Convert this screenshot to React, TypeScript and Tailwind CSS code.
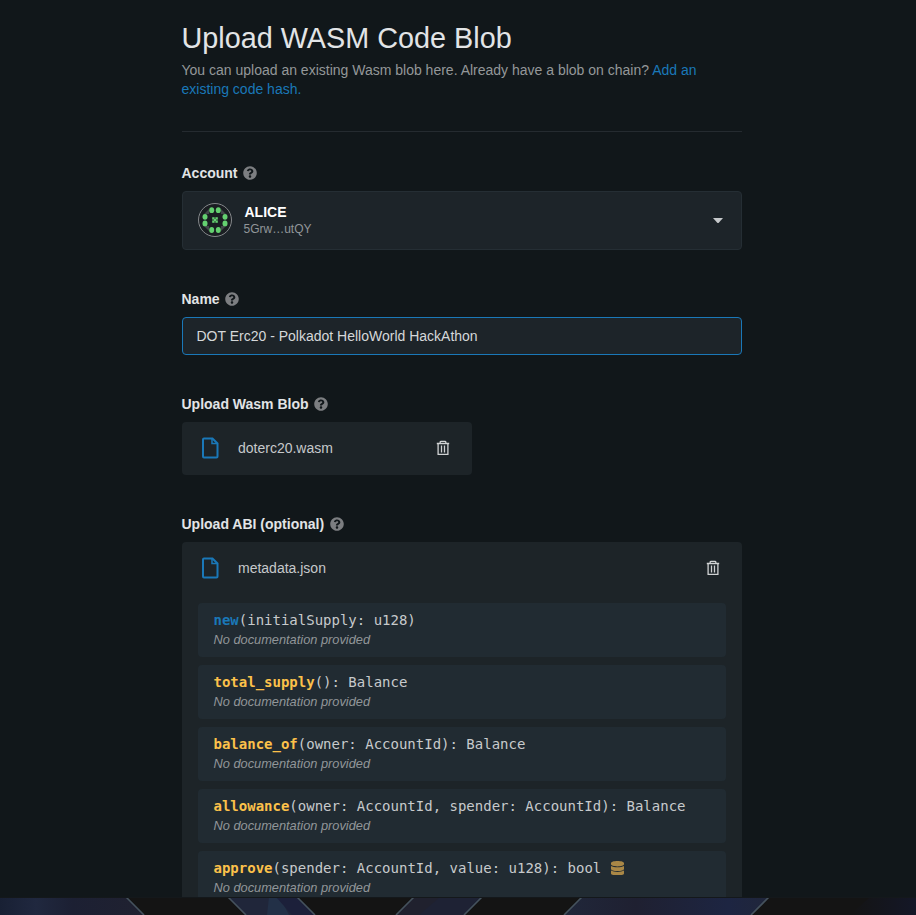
import React from 'react';

type Method = { name: string; signature: string; kind: 'constructor' | 'message'; mutates?: boolean };

const methods: Method[] = [
  { name: 'new', signature: '(initialSupply: u128)', kind: 'constructor' },
  { name: 'total_supply', signature: '(): Balance', kind: 'message' },
  { name: 'balance_of', signature: '(owner: AccountId): Balance', kind: 'message' },
  { name: 'allowance', signature: '(owner: AccountId, spender: AccountId): Balance', kind: 'message' },
  { name: 'approve', signature: '(spender: AccountId, value: u128): bool', kind: 'message', mutates: true },
];

function HelpIcon() {
  return (
    <svg viewBox="0 0 512 512" className="ml-[5.5px] h-[14px] w-[14px] shrink-0 fill-[#7c7e81]">
      <path d="M504 256c0 136.997-111.043 248-248 248S8 392.997 8 256C8 119.083 119.043 8 256 8s248 111.083 248 248zM262.655 90c-54.497 0-89.255 22.957-116.549 63.758-3.536 5.286-2.353 12.415 2.715 16.258l34.699 26.31c5.205 3.947 12.621 3.008 16.665-2.122 17.864-22.658 30.113-35.797 57.303-35.797 20.429 0 45.698 13.148 45.698 32.958 0 14.976-12.363 22.667-32.534 33.976C247.128 238.528 216 254.941 216 296v4c0 6.627 5.373 12 12 12h56c6.627 0 12-5.373 12-12v-1.333c0-28.462 83.186-29.647 83.186-106.667 0-58.002-60.165-102-116.531-102zM256 338c-25.365 0-46 20.635-46 46 0 25.364 20.635 46 46 46s46-20.636 46-46c0-25.365-20.635-46-46-46z" />
    </svg>
  );
}

function Label({ children }: { children: React.ReactNode }) {
  return (
    <div className="flex h-5 items-center text-sm font-bold leading-5 text-[#e2e4e6]">
      <span>{children}</span>
      <HelpIcon />
    </div>
  );
}

function FileIcon() {
  return (
    <svg viewBox="0 0 18 22" className="h-[22px] w-[18px] fill-none stroke-[#1a78b8] stroke-2">
      <path d="M3 1.5H11.5L16.5 6.5V19.5Q16.5 20.5 15.5 20.5H3Q2 20.5 2 19.5V2.5Q2 1.5 3 1.5Z" />
      <path d="M11 1.5V6.5H16.5" strokeWidth="1.5" />
    </svg>
  );
}

function TrashIcon() {
  return (
    <svg viewBox="0 0 14 16" className="h-4 w-[14px] fill-none stroke-[#d0d2d3]" strokeWidth="1.3">
      <path d="M.8 3.5H13.2M4.2 3.3V2Q4.2 1.4 5 1.4H9Q9.8 1.4 9.8 2V3.3M2.1 3.5V14.4H11.9V3.5M5.5 5.5V12.5M8.5 5.5V12.5" />
    </svg>
  );
}

function DatabaseIcon() {
  return (
    <svg viewBox="0 0 448 512" preserveAspectRatio="none" className="ml-[9.5px] h-[14.5px] w-[13px] fill-[#a98746]">
      <path d="M448 73.143v45.714C448 159.143 347.667 192 224 192S0 159.143 0 118.857V73.143C0 32.857 100.333 0 224 0s224 32.857 224 73.143zM448 176v102.857C448 319.143 347.667 352 224 352S0 319.143 0 278.857V176c48.125 33.143 136.208 48.572 224 48.572S399.874 209.143 448 176zm0 160v102.857C448 479.143 347.667 512 224 512S0 479.143 0 438.857V336c48.125 33.143 136.208 48.572 224 48.572S399.874 369.143 448 336z" />
    </svg>
  );
}

function Identicon() {
  const dots = [[13.7, 7.2], [20.3, 7.2], [7, 13.8], [7, 20.4], [27, 13.8], [27, 20.4], [13.7, 27], [20.3, 27]];
  return (
    <svg viewBox="0 0 34 34" className="mb-[2px] h-[34px] w-[34px]">
      <circle cx="17" cy="17" r="16.5" className="fill-[#1a1e22] stroke-[#85888b]" />
      <path d="M6 11L11 6V11ZM28 11L23 6V11ZM6 23L11 28V23ZM28 23L23 28V23Z" className="fill-[#42464a]" />
      {dots.map(([x, y]) => (
        <ellipse key={`${x}-${y}`} cx={x} cy={y} rx="2.5" ry="2.9" className="fill-[#64d070]" />
      ))}
      {[14.2, 17.4].map((x) => [14.2, 17.4].map((y) => (
        <rect key={`${x}-${y}`} x={x} y={y} width="2.4" height="2.4" className="fill-[#64d070]" />
      )))}
      <path d="M16 16H18V18H16Z" className="fill-[#64d070]" />
    </svg>
  );
}

function FileRow({ name }: { name: string }) {
  return (
    <div className="flex h-[53px] items-center pb-[2px] pl-[19.5px] pr-[22px]">
      <FileIcon />
      <span className="ml-[19px] flex-1 text-sm text-[#c6c9cb]">{name}</span>
      <TrashIcon />
    </div>
  );
}

function MethodCard({ method }: { method: Method }) {
  return (
    <div className="h-[54px] shrink-0 rounded bg-[#212b32] pl-4 pt-[7px]">
      <div className="flex h-5 items-center whitespace-pre font-['DejaVu_Sans_Mono',monospace] text-sm leading-5 text-[#c7cacc]">
        <span className={method.kind === 'constructor' ? 'font-bold text-[#1a78b8]' : 'font-bold text-[#fcc14a]'}>{method.name}</span>
        <span>{method.signature}</span>
        {method.mutates && <DatabaseIcon />}
      </div>
      <div className="text-[12.8px] italic leading-[19px] text-[#919699]">No documentation provided</div>
    </div>
  );
}

function Wallpaper() {
  return (
    <svg viewBox="0 0 916 18" preserveAspectRatio="none" className="block h-[18px] w-full">
      <defs>
        <linearGradient id="leftBand">
          <stop offset="0" stopColor="#182034" /><stop offset=".25" stopColor="#20283f" />
          <stop offset=".5" stopColor="#1c2033" /><stop offset="1" stopColor="#202130" />
        </linearGradient>
        <linearGradient id="rightBand">
          <stop offset="0" stopColor="#20273a" /><stop offset=".35" stopColor="#1f2031" />
          <stop offset=".8" stopColor="#1d2542" /><stop offset="1" stopColor="#20263a" />
        </linearGradient>
        <linearGradient id="farEdge">
          <stop offset="0" stopColor="#141414" /><stop offset="1" stopColor="#141727" />
        </linearGradient>
      </defs>
      <rect width="916" height="18" fill="#141414" />
      <path d="M0 0H126L144 18H0Z" fill="url(#leftBand)" />
      <path d="M228 0H297L315 18H246Z" fill="#20263a" />
      <path d="M269 0H280L289 18H267Z" fill="#223047" />
      <path d="M276 0H297L315 18H292Z" fill="#1c203a" />
      <path d="M414 0H482L464 18H396Z" fill="#20212e" />
      <path d="M440 0H482L464 18H419Z" fill="#1e2234" />
      <path d="M582 0H769L751 18H564Z" fill="url(#rightBand)" />
      <path d="M870 0H916V18H850Z" fill="url(#farEdge)" />
      <path d="M126 0L144 18M228 0L246 18M297 0L315 18M414 0L396 18M482 0L464 18M582 0L564 18M769 0L751 18" fill="none" stroke="#45525d" strokeWidth="1.6" />
      <path d="M0 .5H916" stroke="#14181b" />
    </svg>
  );
}

export default function App() {
  return (
    <div className="flex h-[915px] w-[916px] flex-col overflow-hidden bg-[#11171a] font-['Liberation_Sans',Arial,sans-serif]">
      <main className="h-[897px] shrink-0 overflow-hidden pl-[181.5px] pr-[174px]">
        <header className="h-[132px] border-b border-[#252b30] pt-[20px]">
          <h1 className="text-[28.8px] leading-[36px] text-[#e2e4e6]">Upload WASM Code Blob</h1>
          <p className="mt-[5px] text-sm leading-[19px] text-[#949799]">
            You can upload an existing Wasm blob here. Already have a blob on chain?{' '}
            <a className="text-[#1a78b8]">Add an<br />existing code hash.</a>
          </p>
        </header>

        <section className="mt-[31px]">
          <Label>Account</Label>
          <div className="mt-2 flex h-[59px] items-center rounded border border-[#252e34] bg-[#1d2429] pl-[15px] pr-[18px]">
            <Identicon />
            <div className="ml-[12px] flex-1">
              <div className="pl-px text-sm font-bold leading-[17px] text-white">ALICE</div>
              <div className="text-xs leading-4 text-[#919699]">5Grw…utQY</div>
            </div>
            <svg viewBox="0 0 10 5" className="mb-px h-[5px] w-[10px] fill-[#c6c9cb]"><path d="M0 0H10L6 4.5Q5 5.5 4 4.5Z" /></svg>
          </div>
        </section>

        <section className="mt-[39px]">
          <Label>Name</Label>
          <div className="mt-2 flex h-[38px] items-center rounded border border-[#1a78b8] bg-[#1d2429] px-[14px] text-sm text-[#d5d8da]">
            DOT Erc20 - Polkadot HelloWorld HackAthon
          </div>
        </section>

        <section className="mt-[39px]">
          <Label>Upload Wasm Blob</Label>
          <div className="mt-2 w-[290px] rounded bg-[#1d2428]"><FileRow name="doterc20.wasm" /></div>
        </section>

        <section className="mt-[39px]">
          <Label>Upload ABI (optional)</Label>
          <div className="mt-2 rounded bg-[#1d2428]">
            <FileRow name="metadata.json" />
            <div className="flex flex-col gap-2 px-4 pb-4 pt-2">
              {methods.map((method) => <MethodCard key={method.name} method={method} />)}
            </div>
          </div>
        </section>
      </main>
      <Wallpaper />
    </div>
  );
}
